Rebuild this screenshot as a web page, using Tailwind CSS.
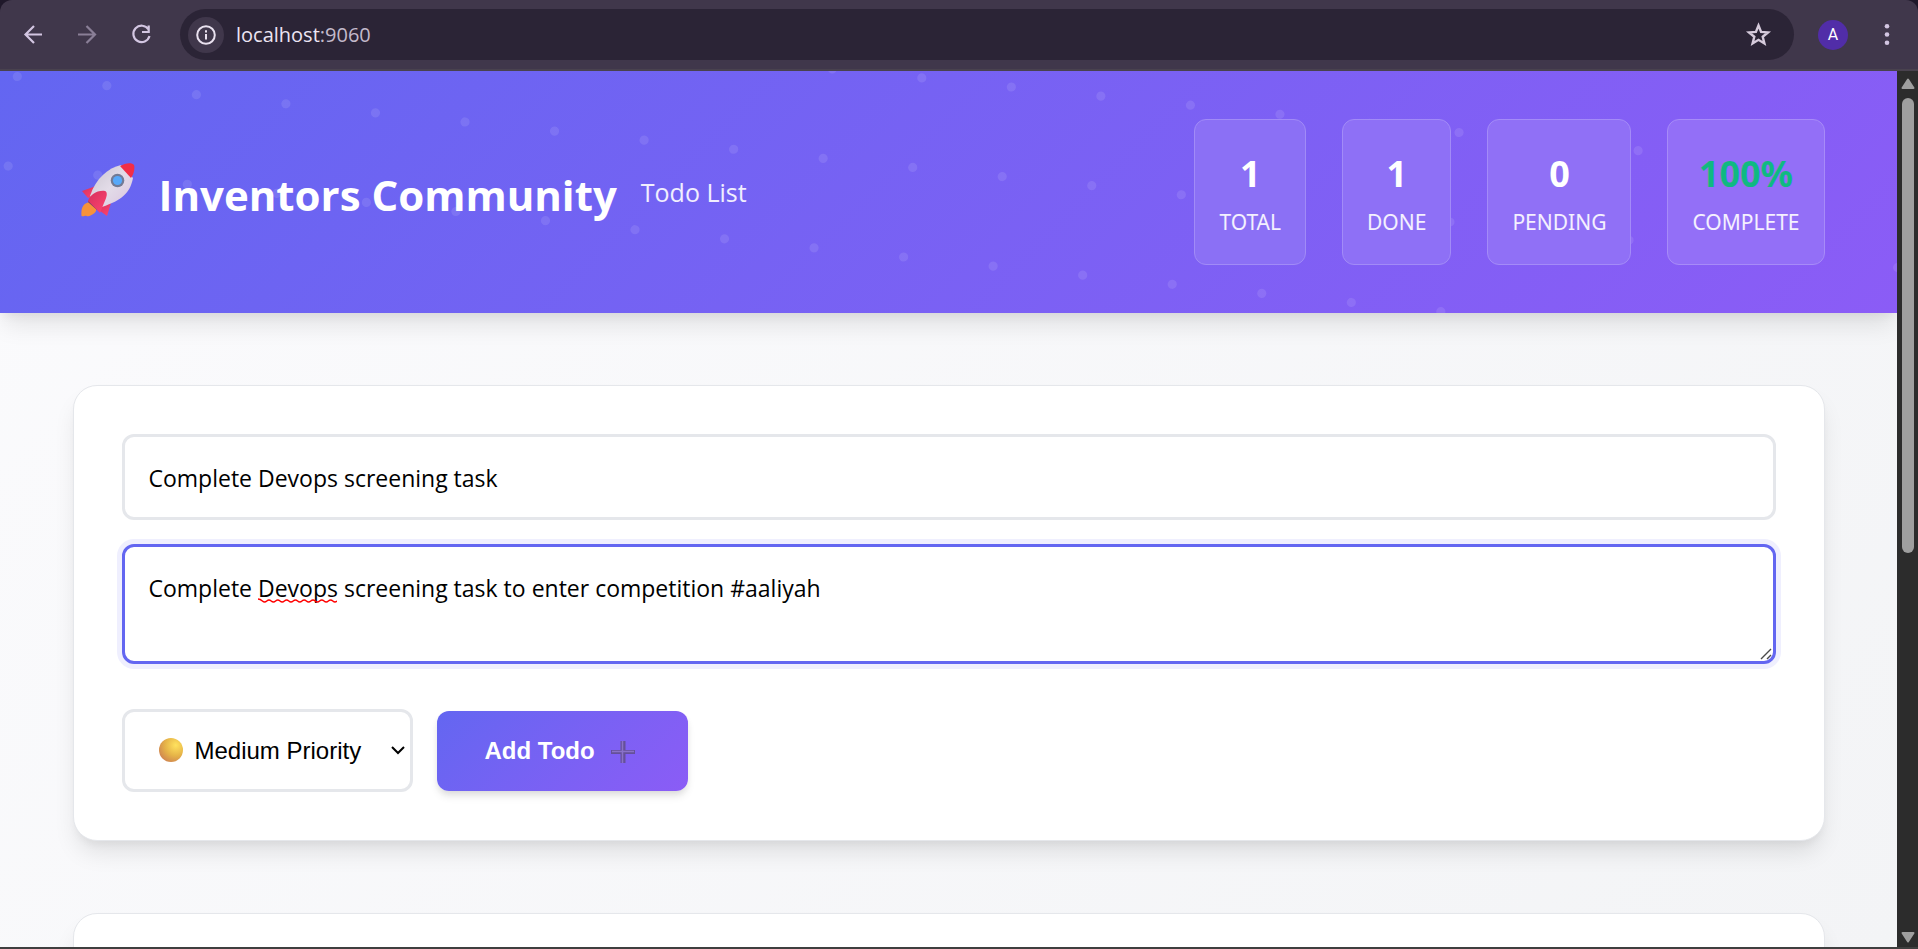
<!DOCTYPE html>
<html lang="en">
<head>
<meta charset="utf-8">
<title>Inventors Community - Todo List</title>
<script src="https://cdn.jsdelivr.net/npm/@tailwindcss/browser@4"></script>
</head>
<body class="h-screen overflow-hidden flex flex-col bg-[#1f182a] font-['Open_Sans','Noto_Sans',sans-serif]">

<!-- Browser toolbar -->
<div class="shrink-0 h-[71px] flex items-center pl-5 pr-5 rounded-t-xl bg-[#40374b] border-b-2 border-[#49424e] text-[#d3c6e2]">
  <button aria-label="Back" class="size-[27px]"><svg viewBox="0 0 27 27" class="size-full" fill="none" stroke="currentColor" stroke-width="2.2"><path d="M22 13.500H5.500M14 5l-8.500 8.500L14 22"/></svg></button>
  <button aria-label="Forward" class="size-[27px] ml-[27px] opacity-50"><svg viewBox="0 0 27 27" class="size-full" fill="none" stroke="currentColor" stroke-width="2.2"><path d="M4 13.500h16.500M12.500 5l8.500 8.500L12.500 22"/></svg></button>
  <button aria-label="Reload" class="size-[27px] ml-[27px]"><svg viewBox="0 0 27 27" class="size-full" fill="none" stroke="currentColor" stroke-width="2.2"><path d="M20.500 8.500A8.200 8.200 0 1 0 21.500 15M20.700 4.500v6.500h-6.700"/></svg></button>
  <div class="flex-1 h-[51px] ml-[25px] rounded-full bg-[#2b2436] flex items-center pl-2 pr-[22px]">
    <button aria-label="Site information" class="size-9 rounded-full bg-[#40374b] flex items-center justify-center text-[#e9e1ef]"><svg viewBox="0 0 20 20" class="size-5" fill="none" stroke="currentColor" stroke-width="2"><circle cx="10" cy="10" r="8.800"/><path d="M10 9v5.500M10 5.200v2.200"/></svg></button>
    <div class="flex-1 flex ml-3 text-[20px] leading-8 text-[#c3bacb]" role="textbox" aria-label="Address"><span class="text-[#ece5f3]">localhost</span>:9060</div>
    <button aria-label="Bookmark this page" class="size-[27px] text-[#d6cbdc]"><svg viewBox="0 0 27 27" class="size-full" fill="none" stroke="currentColor" stroke-width="2.400"><path d="M13.500 4.500l2.600 6.400 6.900.5-5.300 4.400 1.700 6.700-5.900-3.700-5.900 3.700 1.700-6.700L4 11.400l6.900-.5z"/></svg></button>
  </div>
  <button aria-label="Profile" class="size-[30px] ml-6 rounded-full bg-[#512da8] text-white text-[16px] leading-none flex items-center justify-center font-['Roboto',sans-serif]">A</button>
  <button aria-label="Menu" class="w-[22px] h-[27px] ml-7"><svg viewBox="0 0 22 27" class="size-full" fill="currentColor"><circle cx="11" cy="5.300" r="2.300"/><circle cx="11" cy="13.500" r="2.300"/><circle cx="11" cy="21.700" r="2.300"/></svg></button>
</div>

<div class="flex-1 min-h-0 flex border-b-2 border-[#3f3f3f]">
  <div class="flex-1 min-w-0 overflow-hidden bg-linear-135 from-[#fbfbfd] to-[#f3f4f6]">

    <header class="relative bg-linear-135 from-[#6366f1] to-[#8b5cf6] shadow-[0_15px_23px_-4px_rgba(0,0,0,0.1),0_6px_9px_-3px_rgba(0,0,0,0.05)]">
      <!-- Dotted backdrop -->
      <svg class="absolute inset-0 size-full" aria-hidden="true">
        <g transform="translate(17.300 5.500) rotate(5.800)" stroke="#fff" stroke-opacity=".1" stroke-width="9.200" stroke-linecap="round" stroke-dasharray="0 90">
          <path d="M0 -90H2070"/><path d="M0 0H2070"/><path d="M0 90H2070"/>
        </g>
      </svg>
      <div class="relative flex items-center justify-between max-w-[1752px] mx-auto py-12">
        <div class="flex items-center">
          <svg viewBox="0 0 54 54" class="size-[54px] ml-2 -mt-1" aria-hidden="true">
            <defs>
              <linearGradient id="hull" x1="0" y1="0" x2="1" y2="1"><stop offset="0" stop-color="#c9c3cf"/><stop offset=".5" stop-color="#e3dce8"/><stop offset="1" stop-color="#d9c3df"/></linearGradient>
              <linearGradient id="fin" x1="0" y1="0" x2="1" y2="1"><stop offset="0" stop-color="#d5305c"/><stop offset="1" stop-color="#ff4471"/></linearGradient>
            </defs>
            <path d="M8 39C1 41 0 46 .500 53c2 1 4-1 5 0 3 1 4-1 5-1 4-2 5-4 5-7z" fill="#f7923a"/>
            <path d="M1 28l14-5-5 11-3 1z" fill="url(#fin)"/>
            <path d="M30 40l-4 13-11-8z" fill="url(#fin)"/>
            <path d="M7 39l9 8 3-4-9-8z" fill="#4b406e"/>
            <path d="M9 33C15 15 27 5 40 2l12 13C49 30 41 37 21 44z" fill="url(#hull)"/>
            <path d="M39 3C44 0 51-1 53 2c1 3 0 9-3 13z" fill="#f22d46"/>
            <path d="M7 38c2-6 9-11 17-10 3 1 2 6-1 12l-4 10-4-4z" fill="url(#fin)"/>
            <circle cx="36.500" cy="17.500" r="6.800" fill="#737b95"/><circle cx="36.500" cy="17.500" r="4.600" fill="#58a9fa"/>
          </svg>
          <h1 class="ml-6 mt-1.5 text-[42px] leading-[72px] font-bold text-white">Inventors Community</h1>
          <p class="ml-6 text-[25px] leading-[43px] text-white/90">Todo List</p>
        </div>
        <div class="flex gap-9 text-center font-['Noto_Sans',sans-serif]">
          <div class="px-6 pt-[25px] pb-[23px] rounded-xl bg-[#8b70f5] border border-[#a18bf7]"><div class="text-[36px] leading-[58px] font-bold text-white">1</div><div class="text-[21px] leading-[38px] text-white/90">TOTAL</div></div>
          <div class="px-6 pt-[25px] pb-[23px] rounded-xl bg-[#8e70f6] border border-[#a28bf7]"><div class="text-[36px] leading-[58px] font-bold text-white">1</div><div class="text-[21px] leading-[38px] text-white/90">DONE</div></div>
          <div class="px-6 pt-[25px] pb-[23px] rounded-xl bg-[#9070f6] border border-[#a48bf8]"><div class="text-[36px] leading-[58px] font-bold text-white">0</div><div class="text-[21px] leading-[38px] text-white/90">PENDING</div></div>
          <div class="px-6 pt-[25px] pb-[23px] rounded-xl bg-[#936ff7] border border-[#a78bf8]"><div class="text-[36px] leading-[58px] font-bold text-[#10b981]">100%</div><div class="text-[21px] leading-[38px] text-white/90">COMPLETE</div></div>
        </div>
      </div>
    </header>

    <main class="max-w-[1752px] mx-auto pt-[72px] flex flex-col gap-[72px]">
      <form class="p-12 rounded-3xl bg-white border border-[#e5e7eb] shadow-[0_15px_23px_-4px_rgba(0,0,0,0.1),0_6px_9px_-3px_rgba(0,0,0,0.05)] flex flex-col">
        <input aria-label="Title" type="text" value="Complete Devops screening task" class="w-full h-[86px] px-6 pt-[2px] rounded-xl border-3 border-[#e5e7eb] bg-white text-[23px] leading-9 text-black outline-none">
        <div class="relative mt-6">
          <textarea aria-label="Description" spellcheck="false" class="block w-full h-[120px] px-6 pt-[23px] resize-none rounded-xl border-3 border-[#6366f1] bg-white text-[23px] leading-9 text-black outline-none shadow-[0_0_0_5px_rgba(99,102,241,0.1)]">Complete Devops screening task to enter competition #aaliyah</textarea>
          <!-- Spelling mark under "Devops" -->
          <svg class="absolute left-[136px] top-[54px] w-[79px] h-[6px]" viewBox="0 0 79 6" fill="none" stroke="#f00" stroke-width="1.400" aria-hidden="true"><path d="M0 1q2.200 0 4.400 2t4.400 0t4.400 0t4.400 0t4.400 0t4.400 0t4.400 0t4.400 0t4.400 0t4.400 0t4.400 0t4.400 0t4.400 0t4.400 0t4.400 0t4.400 0t4.400 0t4.400 0"/></svg>
          <svg class="absolute right-1 bottom-1 size-3" viewBox="0 0 12 12" fill="none" stroke="#4a4a4a" stroke-width="1.400" aria-hidden="true"><path d="M1 11L11 1M7 11l4-4"/></svg>
        </div>
        <div class="mt-[45px] flex items-center gap-6">
          <div class="relative">
            <select aria-label="Priority" class="block appearance-none h-[83px] w-[291px] pl-[70px] rounded-xl border-3 border-[#e5e7eb] bg-white font-['Liberation_Sans',sans-serif] text-[24px] text-black"><option>Medium Priority</option><option>Low Priority</option><option>High Priority</option></select>
            <svg class="absolute left-[37px] top-[29px] size-6 pointer-events-none" viewBox="0 0 24 24" aria-hidden="true"><defs><radialGradient id="ball" cx=".7" cy=".3" r=".8"><stop offset="0" stop-color="#ffe25e"/><stop offset=".55" stop-color="#e6b448"/><stop offset="1" stop-color="#cf8450"/></radialGradient></defs><circle cx="12" cy="12" r="12" fill="url(#ball)"/></svg>
            <svg class="absolute right-2 top-[37px] w-[14px] h-[9px] pointer-events-none" viewBox="0 0 14 9" fill="none" stroke="#000" stroke-width="2" aria-hidden="true"><path d="M1 1l6 6 6-6"/></svg>
          </div>
          <button type="button" class="h-20 pl-12 pr-[53px] rounded-xl bg-linear-135 from-[#6366f1] to-[#8b5cf6] flex items-center gap-4 text-white text-[24px] font-bold font-['Liberation_Sans',sans-serif] shadow-[0_6px_9px_-1px_rgba(0,0,0,0.1),0_3px_6px_-1px_rgba(0,0,0,0.06)]">
            Add Todo
            <svg viewBox="0 0 24 24" class="size-6 mt-0.5" aria-hidden="true"><path d="M12 1v22" stroke="#65509a" stroke-width="5"/><path d="M0 12h24" stroke="#65509a" stroke-width="4"/><path d="M11.500 1v22M1 11.500h22" stroke="#8a72c8" stroke-width="1.500"/></svg>
          </button>
        </div>
      </form>
      <section class="h-60 shrink-0 rounded-3xl bg-white border border-[#e5e7eb] shadow-[0_15px_23px_-4px_rgba(0,0,0,0.1)]" aria-label="Todos"></section>
    </main>
  </div>

  <!-- Scrollbar -->
  <div class="w-[21px] shrink-0 bg-[#2c2c2c] flex flex-col items-center pt-[7px] pb-[4px]">
    <svg viewBox="0 0 14 11" class="w-[14px] h-[11px] shrink-0" fill="#9f9f9f" stroke="#9f9f9f" stroke-width="2" stroke-linejoin="round"><path d="M7 1.500l5.500 8.500h-11z"/></svg>
    <div class="flex-1 w-3 pt-[9px]"><div class="h-[455px] rounded-full bg-[#9f9f9f]"></div></div>
    <svg viewBox="0 0 14 11" class="w-[14px] h-[11px] shrink-0" fill="#9f9f9f" stroke="#9f9f9f" stroke-width="2" stroke-linejoin="round"><path d="M7 9.500L1.500 1h11z"/></svg>
  </div>
</div>
</body>
</html>
